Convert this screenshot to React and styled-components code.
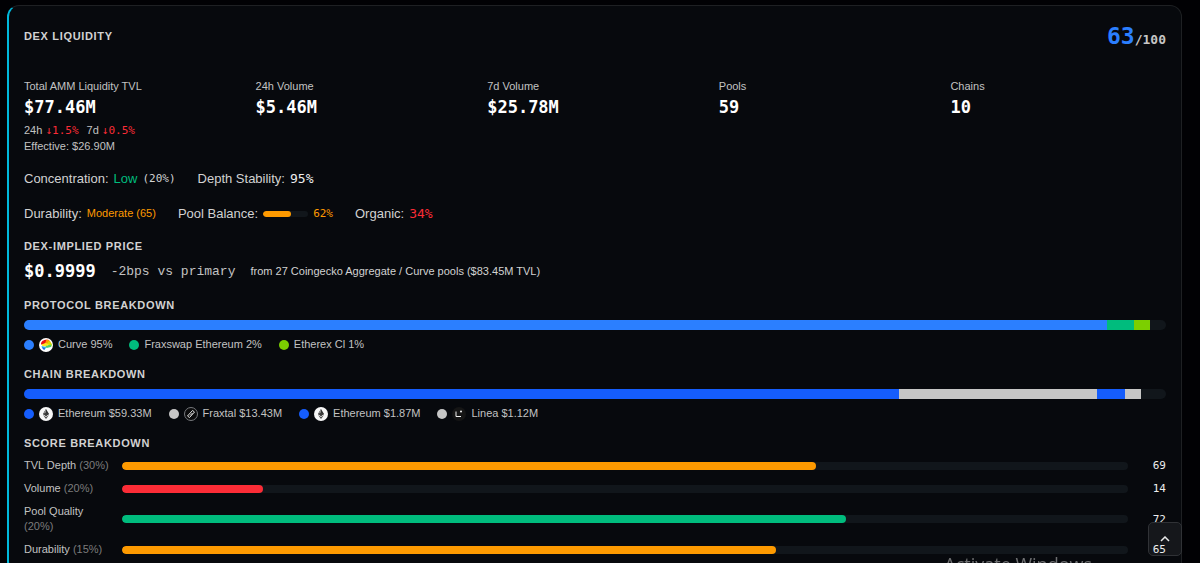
import React from "react";
import styled, { createGlobalStyle } from "styled-components";

const color = {
  page: "#010104",
  card: "#07090d",
  line: "#1e2023",
  track: "#11161b",
  text: "#d2d2d2",
  label: "#c2c2c2",
  muted: "#7c7c7c",
  bright: "#ffffff",
  cyan: "#00b8db",
  blue: "#2b7fff",
  royal: "#155dfc",
  green: "#00bc7d",
  lime: "#7ccf00",
  orange: "#fe9a00",
  red: "#fb2c36",
  silver: "#c6c6c6",
};

const sans = `"Liberation Sans", Arial, sans-serif`;
const mono = `"DejaVu Sans Mono", monospace`;
const slabMono = `"Liberation Mono", "Courier New", monospace`;

const GlobalStyle = createGlobalStyle`
  * { box-sizing: border-box; }
  body {
    margin: 0;
    background: ${color.page};
    color: ${color.text};
    font: 11px/16px ${sans};
  }
`;

const Page = styled.main`
  padding: 5px 18px 16px 7px;
`;

const Card = styled.section`
  display: flex;
  flex-direction: column;
  gap: 14px;
  padding: 18px 15px 16px;
  background: ${color.card};
  border: 1px solid ${color.line};
  border-left: 2px solid ${color.cyan};
  border-radius: 12px;
`;

const Header = styled.header`
  display: flex;
  align-items: center;
  justify-content: space-between;
  margin-bottom: 16px;
`;

const Heading = styled.h2`
  margin: 0;
  font-size: 11px;
  line-height: 16px;
  font-weight: 700;
  letter-spacing: 0.06em;
  text-transform: uppercase;
`;

const Score = styled.div`
  font: 700 23px/24px ${mono};
  color: ${color.blue};
`;

const ScoreMax = styled.span`
  font-size: 13px;
  line-height: 1;
  color: ${color.silver};
`;

const Stats = styled.dl`
  display: grid;
  grid-template-columns: repeat(5, 1fr);
  column-gap: 16px;
  margin: 0;
`;

const StatLabel = styled.dt`
  color: ${color.label};
`;

const StatValue = styled.dd`
  margin: 2px 0 4px;
  font: 700 17px/22px ${mono};
  color: ${color.bright};
`;

const StatNote = styled.dd`
  display: flex;
  gap: 8px;
  margin: 0;
  color: ${color.label};
`;

const Mono = styled.span`
  font-family: ${(p) => (p.$slab ? slabMono : mono)};
  font-size: ${(p) => p.$size || 11}px;
  line-height: 1;
  color: ${(p) => p.$color || "inherit"};
`;

const Metrics = styled.div`
  display: flex;
  flex-wrap: wrap;
  column-gap: 22px;
  font-size: 13px;
  line-height: 21px;
`;

const Metric = styled.div`
  display: flex;
  align-items: center;
  gap: 5px;
`;

const Tone = styled.span`
  font-size: ${(p) => p.$size || 13}px;
  color: ${(p) => p.$color};
`;

const Block = styled.section`
  display: flex;
  flex-direction: column;
  gap: ${(p) => p.$gap || 7}px;
`;

const PriceRow = styled.div`
  display: flex;
  align-items: center;
  gap: 15px;
  line-height: 24px;
`;

const Price = styled.strong`
  font: 700 17px/24px ${mono};
  color: ${color.bright};
`;

const Track = styled.div`
  display: flex;
  flex: ${(p) => p.$flex || "none"};
  width: ${(p) => p.$width || "auto"};
  height: ${(p) => p.$height}px;
  overflow: hidden;
  border-radius: 5px;
  background: ${color.track};
`;

const Fill = styled.div`
  background: ${(p) => p.$color};
  border-radius: ${(p) => (p.$round ? "5px" : "0")};
`;

const Legend = styled.ul`
  display: flex;
  flex-wrap: wrap;
  gap: 17px;
  margin: 0;
  padding: 0;
  list-style: none;
  line-height: 15px;
`;

const LegendItem = styled.li`
  display: flex;
  align-items: center;
  gap: 5px;
  color: ${color.label};
`;

const Dot = styled.span`
  width: 10px;
  height: 10px;
  border-radius: 5px;
  background: ${(p) => p.$color};
`;

const Logo = styled.svg`
  display: block;
  width: 14px;
  height: 14px;
`;

const ScoreList = styled.div`
  display: flex;
  flex-direction: column;
  gap: 8px;
  line-height: 15px;
`;

const ScoreRow = styled.div`
  display: flex;
  align-items: center;
  gap: 10px;
`;

const ScoreLabel = styled.div`
  flex: 0 0 88px;
  color: ${color.label};
`;

const Weight = styled.span`
  color: ${color.muted};
`;

const ScoreValue = styled.div`
  flex: 0 0 28px;
  text-align: right;
  font-family: ${mono};
  font-size: 11px;
  color: #ededed;
`;

const TopButton = styled.button`
  position: fixed;
  right: 18px;
  bottom: 7px;
  display: grid;
  place-items: center;
  width: 34px;
  height: 34px;
  padding: 0;
  color: #e8e8e8;
  background: rgba(255, 255, 255, 0.06);
  border: 1px solid #303236;
  border-radius: 5px;
`;

const Watermark = styled.div`
  position: fixed;
  right: 108px;
  bottom: -13px;
  font: 18px/24px "Open Sans", "Noto Sans", sans-serif;
  color: #6e6f71;
  pointer-events: none;
`;

const CurveLogo = () => (
  <Logo viewBox="0 0 28 28" aria-hidden="true">
    <circle cx="14" cy="14" r="14" fill="#fff" />
    <path d="M4 12 C4 5 12 2 20 4 L18 10 L13 11 L6 14Z" fill="#e80e12" />
    <path d="M15 3 L21 5 L24 9 L18 12 L12 11Z" fill="#ff9a00" />
    <path d="M20 6 L26 12 L25 17 L18 16 L16 11Z" fill="#d8dc00" />
    <path d="M5 13 L13 10 L20 13 L14 17 L7 16Z" fill="#ffe51f" />
    <path d="M13 16 L25 13 L24 18 L15 20Z" fill="#4bd06b" />
    <path d="M5 16 L15 18 L11 24 L6 20Z" fill="#30b9e8" />
    <path d="M6 19 L12 20 L10 24Z" fill="#2457e6" />
  </Logo>
);

const EthereumLogo = () => (
  <Logo viewBox="0 0 28 28" aria-hidden="true">
    <circle cx="14" cy="14" r="14" fill="#f7f7f7" />
    <path d="M14 4 L20 14 L14 18 L8 14Z" fill="#2f3030" />
    <path d="M14 4 L8 14 L14 18Z" fill="#8c8c8c" />
    <path d="M14 11 L20 14 L14 18 L8 14Z" fill="#3c3c3b" />
    <path d="M8 16 L14 20 L20 16 L14 24Z" fill="#4a4a4a" />
  </Logo>
);

const FraxtalLogo = () => (
  <Logo viewBox="0 0 28 28" aria-hidden="true">
    <circle cx="14" cy="14" r="13" fill="#0c0c0d" stroke="#77797c" strokeWidth="2" />
    <path
      d="M7 18 L17 7 L21 10 L11 21Z M12 17 L17 12"
      fill="none"
      stroke="#e4e4e4"
      strokeWidth="2"
      strokeLinejoin="round"
    />
  </Logo>
);

const LineaLogo = () => (
  <Logo viewBox="0 0 28 28" aria-hidden="true">
    <circle cx="14" cy="14" r="14" fill="#151515" />
    <path d="M8 9 V19 H18" fill="none" stroke="#f2f2f2" strokeWidth="2" />
    <circle cx="18" cy="9" r="2" fill="#f2f2f2" />
  </Logo>
);

const protocols = [
  { name: "Curve 95%", share: 94.8, tone: color.blue, Icon: CurveLogo },
  { name: "Fraxswap Ethereum 2%", share: 2.4, tone: color.green },
  { name: "Etherex Cl 1%", share: 1.4, tone: color.lime },
];

const chains = [
  { name: "Ethereum $59.33M", share: 76.6, tone: color.royal, Icon: EthereumLogo },
  { name: "Fraxtal $13.43M", share: 17.4, tone: color.silver, Icon: FraxtalLogo },
  { name: "Ethereum $1.87M", share: 2.4, tone: color.royal, Icon: EthereumLogo },
  { name: "Linea $1.12M", share: 1.4, tone: color.silver, Icon: LineaLogo },
];

const scores = [
  { name: "TVL Depth", weight: 30, value: 69, tone: color.orange },
  { name: "Volume", weight: 20, value: 14, tone: color.red },
  { name: "Pool Quality", weight: 20, value: 72, tone: color.green },
  { name: "Durability", weight: 15, value: 65, tone: color.orange },
];

function Breakdown({ title, items }) {
  return (
    <Block>
      <Heading>{title}</Heading>
      <Track $height={10}>
        {items.map((item) => (
          <Fill key={item.name} $color={item.tone} style={{ width: `${item.share}%` }} />
        ))}
      </Track>
      <Legend>
        {items.map(({ name, tone, Icon }) => (
          <LegendItem key={name}>
            <Dot $color={tone} />
            {Icon && <Icon />}
            <span>{name}</span>
          </LegendItem>
        ))}
      </Legend>
    </Block>
  );
}

function Stat({ label, value, children }) {
  return (
    <div>
      <StatLabel>{label}</StatLabel>
      <StatValue>{value}</StatValue>
      {children}
    </div>
  );
}

export default function App() {
  return (
    <Page>
      <GlobalStyle />
      <Card>
        <Header>
          <Heading>Dex Liquidity</Heading>
          <Score>
            63<ScoreMax>/100</ScoreMax>
          </Score>
        </Header>

        <Stats>
          <Stat label="Total AMM Liquidity TVL" value="$77.46M">
            <StatNote>
              <span>24h <Mono $color={color.red}>↓1.5%</Mono></span>
              <span>7d <Mono $color={color.red}>↓0.5%</Mono></span>
            </StatNote>
            <StatNote>Effective: $26.90M</StatNote>
          </Stat>
          <Stat label="24h Volume" value="$5.46M" />
          <Stat label="7d Volume" value="$25.78M" />
          <Stat label="Pools" value="59" />
          <Stat label="Chains" value="10" />
        </Stats>

        <Metrics>
          <Metric>
            Concentration: <Tone $color={color.green}>Low</Tone> <Mono>(20%)</Mono>
          </Metric>
          <Metric>
            Depth Stability: <Mono $size={13} $color="#ededed">95%</Mono>
          </Metric>
        </Metrics>

        <Metrics>
          <Metric>
            Durability: <Tone $size={11} $color={color.orange}>Moderate (65)</Tone>
          </Metric>
          <Metric>
            Pool Balance:
            <Track $height={6} $width="45px">
              <Fill $round $color={color.orange} style={{ width: "62%" }} />
            </Track>
            <Mono $color={color.orange}>62%</Mono>
          </Metric>
          <Metric>
            Organic: <Mono $size={13} $color={color.red}>34%</Mono>
          </Metric>
        </Metrics>

        <Block $gap={5}>
          <Heading>Dex-Implied Price</Heading>
          <PriceRow>
            <Price>$0.9999</Price>
            <Mono $slab $size={13} $color={color.label}>-2bps vs primary</Mono>
            <span>from 27 Coingecko Aggregate / Curve pools ($83.45M TVL)</span>
          </PriceRow>
        </Block>

        <Breakdown title="Protocol Breakdown" items={protocols} />
        <Breakdown title="Chain Breakdown" items={chains} />

        <Block>
          <Heading>Score Breakdown</Heading>
          <ScoreList>
            {scores.map((row) => (
              <ScoreRow key={row.name}>
                <ScoreLabel>
                  {row.name} <Weight>({row.weight}%)</Weight>
                </ScoreLabel>
                <Track $height={8} $flex="1">
                  <Fill $round $color={row.tone} style={{ width: `${row.value}%` }} />
                </Track>
                <ScoreValue>{row.value}</ScoreValue>
              </ScoreRow>
            ))}
          </ScoreList>
        </Block>
      </Card>

      <Watermark>Activate Windows</Watermark>
      <TopButton type="button" aria-label="Back to top">
        <svg width="10" height="6" viewBox="0 0 10 6" fill="none" stroke="currentColor" strokeWidth="1.5">
          <path d="M1 5 L5 1 L9 5" />
        </svg>
      </TopButton>
    </Page>
  );
}
